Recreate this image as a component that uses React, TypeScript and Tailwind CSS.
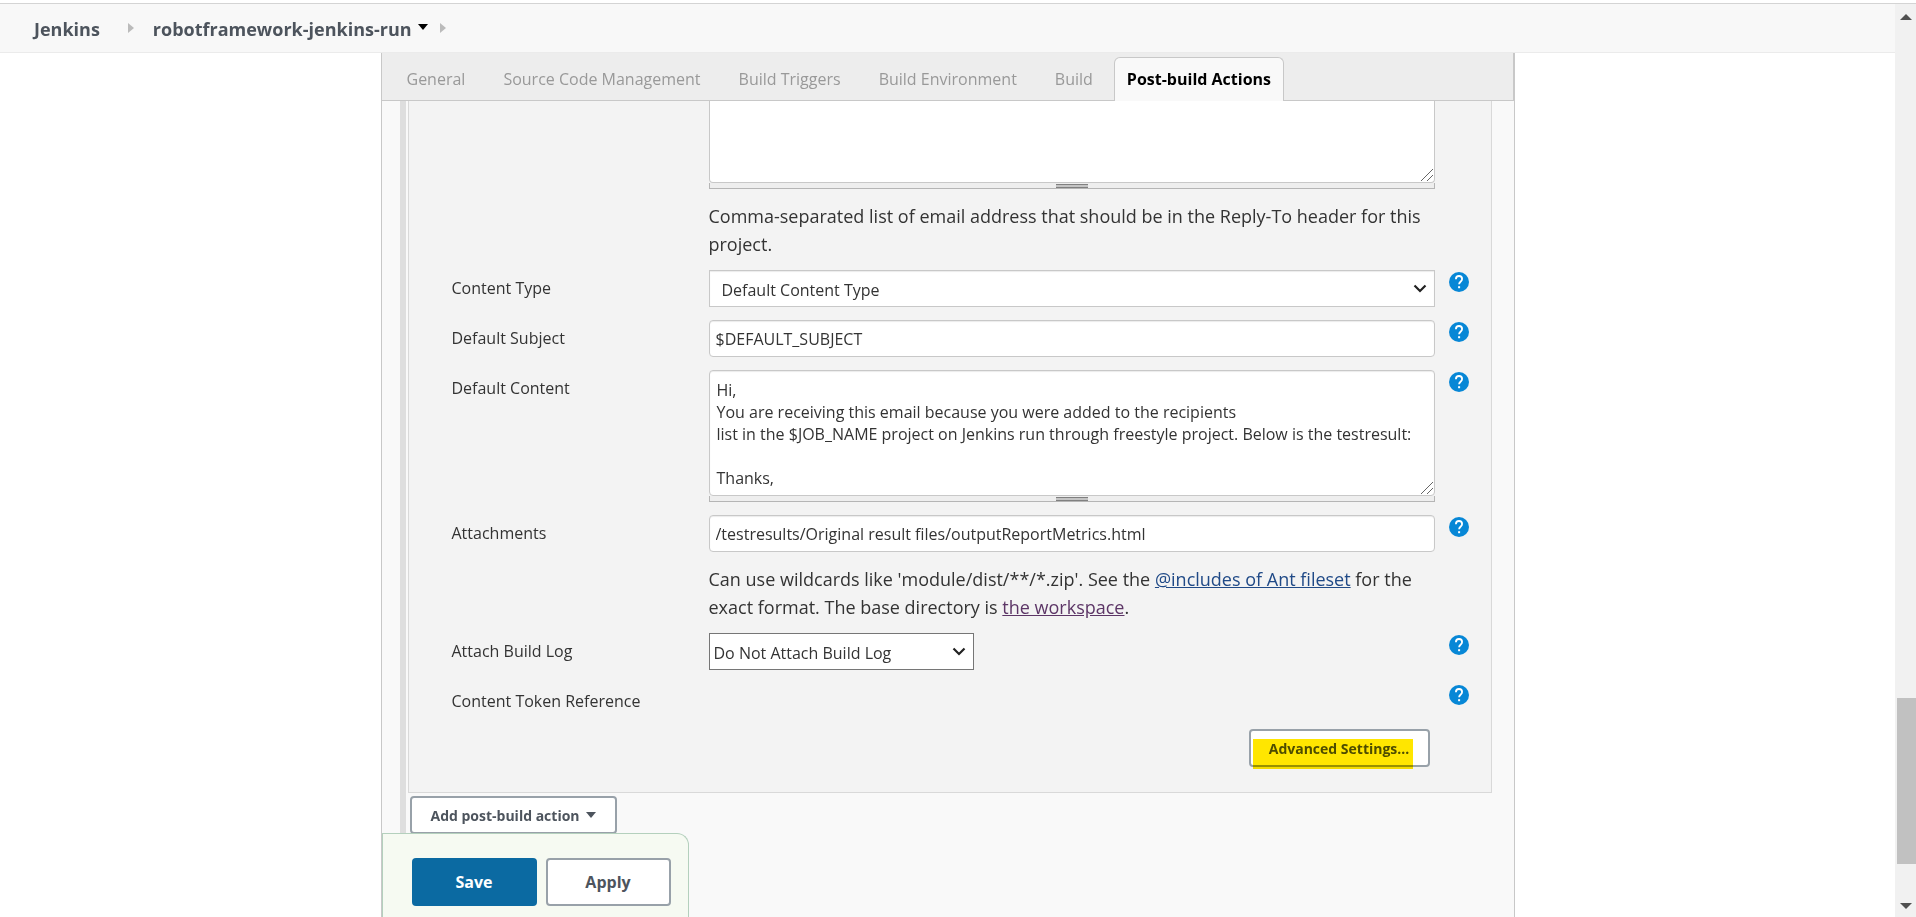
import type { ReactNode } from "react";

const emailBody = `Hi,
You are receiving this email because you were added to the recipients
list in the $JOB_NAME project on Jenkins run through freestyle project. Below is the testresult:

Thanks,`;

const tabs = ["General", "Source Code Management", "Build Triggers", "Build Environment", "Build"];

function HelpButton({ topic }: { topic: string }) {
  return (
    <button type="button" aria-label={`Help for ${topic}`} className="mt-0.5 ml-3.5 size-5 shrink-0">
      <svg viewBox="0 0 20 20" className="size-5">
        <circle cx="10" cy="10" r="10" fill="#0787d6" />
        <path d="M6.9 7.2C6.9 5.3 8.2 4 10 4s3.1 1.2 3.1 2.900c0 1.4-.8 2.1-1.6 2.8-.9.8-1.4 1.4-1.4 2.6" fill="none" stroke="#fff" strokeWidth="1.8" />
        <rect x="9.1" y="14.2" width="2" height="2" fill="#fff" />
      </svg>
    </button>
  );
}

function Row({ label, id, help = true, children }: { label: string; id?: string; help?: boolean; children?: ReactNode }) {
  return (
    <div className="flex min-h-[33px] items-start">
      <div className="w-[257px] shrink-0 pt-1.5 leading-6">
        {id ? <label htmlFor={id}>{label}</label> : <span>{label}</span>}
      </div>
      <div className="min-w-0 flex-1">{children}</div>
      {help ? <HelpButton topic={label} /> : <div className="ml-3.5 w-5 shrink-0" />}
    </div>
  );
}

function Chevron() {
  return (
    <svg viewBox="0 0 14 10" className="pointer-events-none absolute top-3.5 right-2 h-2.5 w-3.5">
      <path d="M1.5 1.5 7 7l5.5-5.5" fill="none" stroke="#222" strokeWidth="2.2" />
    </svg>
  );
}

function Grip() {
  return (
    <svg viewBox="0 0 12 12" className="pointer-events-none absolute right-0.5 bottom-0.5 size-3">
      <path d="M0 12 12 0M6 12l6-6" fill="none" stroke="#555" strokeWidth="0.9" />
    </svg>
  );
}

function ResizeHandle() {
  return (
    <div className="flex h-1.5 items-start justify-center border-x border-b border-[#b5b5b5] bg-[#eee]">
      <div className="mt-px h-1 w-8 border-y border-[#808080] bg-[#c4c4c4]" />
    </div>
  );
}

function HelpText({ children }: { children: ReactNode }) {
  return <p className="mt-[13px] -mb-px text-[18px] leading-7">{children}</p>;
}

function Breadcrumbs() {
  return (
    <nav className="flex h-[49px] shrink-0 items-center border-b border-[#ebebeb] bg-[#f8f8f8] pt-0.5 pl-[34px] text-[18px] font-bold text-[#4d545d]">
      <a href="#jenkins">Jenkins</a>
      <svg viewBox="0 0 6 10" className="mr-[19px] mb-0.5 ml-7 h-2.5 w-1.5">
        <path d="M0 0 6 5 0 10z" fill="#bbb" />
      </svg>
      <a href="#job">robotframework-jenkins-run</a>
      <svg viewBox="0 0 10 6" className="mb-1 ml-1.5 h-1.5 w-2.5">
        <path d="M0 0h10L5 6z" fill="#000" />
      </svg>
      <svg viewBox="0 0 6 10" className="mb-0.5 ml-3 h-2.5 w-1.5">
        <path d="M0 0 6 5 0 10z" fill="#bbb" />
      </svg>
    </nav>
  );
}

function Tabs() {
  return (
    <div role="tablist" className="flex h-12 shrink-0 items-end border-r border-b border-[#c8c8c8] bg-[#ededed] pl-1.5 text-[16px]">
      {tabs.map((tab) => (
        <button key={tab} type="button" role="tab" className="h-[43px] px-[19px] text-[#999]">
          {tab}
        </button>
      ))}
      <button
        type="button"
        role="tab"
        aria-selected="true"
        className="-mb-px ml-0.5 h-11 rounded-t-md border border-b-0 border-[#c8c8c8] bg-[#f9f9f9] px-3 pb-0.5 font-bold text-black"
      >
        Post-build Actions
      </button>
    </div>
  );
}

function Scrollbar() {
  return (
    <div aria-hidden="true" className="flex w-[21px] shrink-0 flex-col items-center bg-[#f1f1f1] pt-2.5 pb-2">
      <svg viewBox="0 0 12 6" className="h-1.5 w-3">
        <path d="M6 0 12 6H0z" fill="#505050" />
      </svg>
      <div className="flex-[678]" />
      <div className="flex-[166] w-[19px] self-end bg-[#c1c1c1]" />
      <div className="flex-[39]" />
      <svg viewBox="0 0 12 6" className="h-1.5 w-3">
        <path d="M0 0h12L6 6z" fill="#505050" />
      </svg>
    </div>
  );
}

const field = "block w-full border border-[#c8c8c8] bg-white text-[#333] shadow-[inset_0_1px_1px_rgba(0,0,0,0.08)]";

export default function App() {
  return (
    <div className="flex h-screen flex-col overflow-hidden bg-white font-['Open_Sans','Noto_Sans',sans-serif] text-[16px] text-[#333]">
      <div className="h-1 shrink-0 border-b border-[#d4d4d4]" />
      <div className="flex min-h-0 flex-1">
        <div className="flex min-w-0 flex-1 flex-col">
          <Breadcrumbs />
          <main className="relative mx-auto flex min-h-0 w-full max-w-[1134px] flex-1 flex-col border-x border-[#c8c8c8] bg-[#f9f9f9]">
            <Tabs />
            <form className="flex min-h-0 flex-1 flex-col overflow-hidden pr-[22px] pl-[18px]">
              <div className="flex-1 border-l-[6px] border-[#dedede] pl-0.5">
                <section className="flex flex-col gap-[13px] border border-t-0 border-[#d9d9d9] bg-[#f3f3f3] pr-[22px] pb-[25px] pl-[43px]">
                  <Row label="" help={false}>
                    <div className="relative">
                      <textarea
                        aria-label="Reply-To List"
                        className={`${field} h-[82px] resize-none rounded-b border-t-0 shadow-none`}
                      />
                      <Grip />
                    </div>
                    <ResizeHandle />
                    <HelpText>
                      Comma-separated list of email address that should be in the Reply-To header for this project.
                    </HelpText>
                  </Row>
                  <Row label="Content Type" id="type">
                    <div className="relative">
                      <select id="type" className={`${field} h-[37px] appearance-none px-3 pt-0.5`}>
                        <option>Default Content Type</option>
                      </select>
                      <Chevron />
                    </div>
                  </Row>
                  <Row label="Default Subject" id="subject">
                    <input id="subject" defaultValue="$DEFAULT_SUBJECT" className={`${field} h-[37px] rounded px-1.5`} />
                  </Row>
                  <Row label="Default Content" id="content">
                    <div className="relative">
                      <textarea
                        id="content"
                        defaultValue={emailBody}
                        className={`${field} h-[126px] resize-none overflow-hidden rounded px-[7px] pt-2 leading-[22px]`}
                      />
                      <Grip />
                    </div>
                    <ResizeHandle />
                  </Row>
                  <Row label="Attachments" id="attachments">
                    <input
                      id="attachments"
                      defaultValue="/testresults/Original result files/outputReportMetrics.html"
                      className={`${field} h-[37px] rounded px-1.5`}
                    />
                    <HelpText>
                      Can use wildcards like 'module/dist/**/*.zip'. See the{" "}
                      <a href="#fileset" className="text-[#204a87] underline">@includes of Ant fileset</a> for the exact format. The
                      base directory is <a href="#workspace" className="text-[#5c3566] underline">the workspace</a>.
                    </HelpText>
                  </Row>
                  <Row label="Attach Build Log" id="log">
                    <div className="relative w-[265px]">
                      <select id="log" className="block h-[37px] w-full appearance-none border border-[#767676] bg-white px-1 pt-0.5">
                        <option>Do Not Attach Build Log</option>
                      </select>
                      <Chevron />
                    </div>
                  </Row>
                  <Row label="Content Token Reference" />
                  <div className="flex justify-end pr-[39px]">
                    <button
                      type="button"
                      className="relative h-[38px] w-[181px] rounded border-2 border-[#98a1a9] bg-white text-[14px] font-bold text-[#4d545d]"
                    >
                      Advanced Settings...
                      <span className="absolute top-2 left-0.5 h-[30px] w-40 bg-[#ffe600] mix-blend-multiply" />
                    </button>
                  </div>
                </section>
                <button
                  type="button"
                  className="mt-[3px] ml-0.5 flex h-[38px] w-[207px] items-center justify-center gap-1.5 rounded border-2 border-[#98a1a9] bg-white text-[14px] font-bold text-[#4d545d]"
                >
                  Add post-build action
                  <svg viewBox="0 0 10 6" className="h-1.5 w-2.5">
                    <path d="M0 0h10L5 6z" fill="#4d545d" />
                  </svg>
                </button>
              </div>
            </form>
            <div className="absolute bottom-0 left-0 flex h-[84px] items-start gap-[9px] rounded-tr-xl border border-b-0 border-[#b4d0bd] bg-[#f6faf2] pt-6 pr-[17px] pl-[29px] text-[16px] font-bold">
              <button type="submit" className="h-12 w-[125px] rounded bg-[#0b6aa2] text-white">Save</button>
              <button type="button" className="h-12 w-[125px] rounded border-2 border-[#98a1a9] bg-white text-[#4d545d]">Apply</button>
            </div>
          </main>
        </div>
        <Scrollbar />
      </div>
    </div>
  );
}
